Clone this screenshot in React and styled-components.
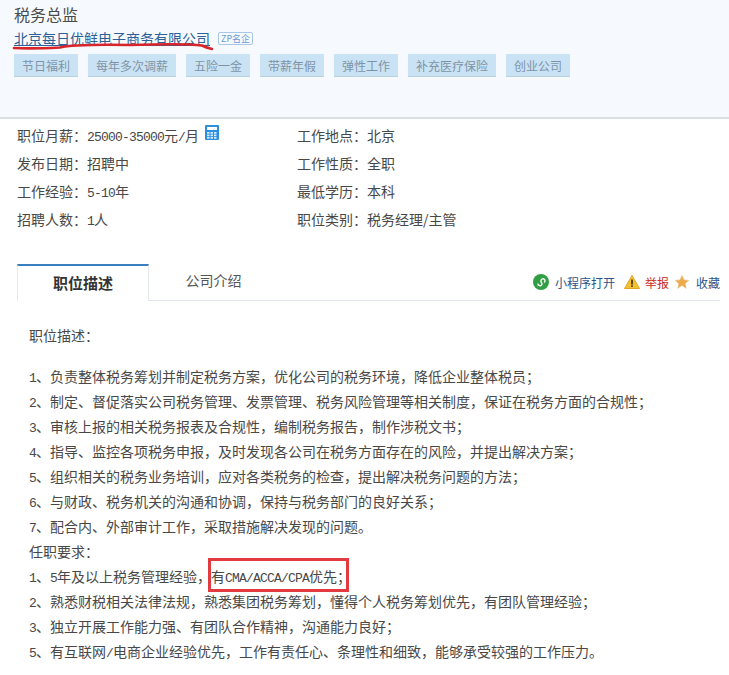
import React from "react";
import styled, { createGlobalStyle } from "styled-components";

const Global = createGlobalStyle`
  html, body { margin: 0; padding: 0; background: #fff; }
  body { font-family: "Noto Sans CJK SC", "Liberation Sans", sans-serif; font-size: 14px; color: #444; }
`;
const Page = styled.div`
  position: relative;
  width: 729px;
  height: 675px;
  overflow: hidden;
`;
const Header = styled.header`
  height: 119px;
  box-sizing: border-box;
  padding: 4px 14px 0;
  background: #f6faff;
  border-bottom: 2px solid #dcdfe2;
`;
const Title = styled.h1`
  margin: 0;
  font-size: 16px;
  font-weight: 400;
  line-height: 20px;
  color: #4a4a4a;
`;
const CompanyRow = styled.div`
  display: flex;
  align-items: center;
  gap: 8px;
  height: 26px;
  margin-top: 1px;
`;
const Company = styled.span`
  font-size: 14px;
  line-height: 20px;
  color: #2d5f99;
  text-decoration: underline;
  text-underline-offset: 1px;
`;
const Badge = styled.span`
  border: 1px solid #a9c6e8;
  border-radius: 2px;
  padding: 0 2px;
  font-size: 9px;
  line-height: 11px;
  color: #6b9bd5;
`;
const Tags = styled.div`
  display: flex;
  gap: 10px;
  margin-top: 3px;
`;
const Tag = styled.span`
  padding: 0 8px;
  height: 23px;
  line-height: 23px;
  font-size: 12px;
  color: #7f93a8;
  background: #c9e3f4;
  border-bottom: 1px solid #b9d2e0;
  box-sizing: border-box;
`;
const Info = styled.section`
  display: grid;
  grid-template-columns: 280px 1fr;
  grid-auto-rows: 28px;
  padding: 2px 0 0 17px;
`;
const Cell = styled.div`
  display: flex;
  align-items: center;
  font-size: 14px;
  color: #484848;
  white-space: pre;
`;
const Num = styled.span`
  font-family: "Liberation Mono", monospace;
  font-size: 13px;
  letter-spacing: -0.8px;
  line-height: 0;
`;
const Calc = styled.svg`
  width: 14px;
  height: 15px;
  margin: -5px 0 0 6px;
`;
const TabBar = styled.nav`
  display: flex;
  align-items: stretch;
  height: 36px;
  margin: 31px 9px 0 17px;
  border-bottom: 1px solid #e2e6ee;
  box-sizing: content-box;
`;
const ActiveTab = styled.div`
  width: 132px;
  height: 37px;
  box-sizing: border-box;
  border-top: 2px solid #3c7fc0;
  border-left: 1px solid #e4e8f0;
  border-right: 1px solid #e4e8f0;
  background: #fff;
  text-align: center;
  font-size: 15px;
  font-weight: 700;
  line-height: 34px;
  color: #333;
`;
const Tab = styled.div`
  width: 129px;
  text-align: center;
  font-size: 14px;
  line-height: 32px;
  color: #555;
`;
const Actions = styled.div`
  margin-left: auto;
  display: flex;
  align-items: center;
  height: 36px;
  font-size: 12px;
`;
const Action = styled.span`
  color: ${(p) => p.$color};
  margin-left: ${(p) => p.$gap}px;
  white-space: nowrap;
`;
const ActionIcon = styled.svg`
  width: 16px;
  height: 16px;
  margin-left: ${(p) => p.$gap}px;
`;
const Body = styled.section`
  padding: 22px 0 0 29px;
  font-size: 14px;
  color: #484848;
`;
const Heading = styled.p`
  margin: 0 0 16px;
  line-height: 25px;
  white-space: nowrap;
`;
const Line = styled.p`
  margin: 0;
  line-height: 25px;
  white-space: nowrap;
`;
const Scribble = styled.svg`
  position: absolute;
  left: 10px;
  top: 40px;
  width: 210px;
  height: 14px;
  overflow: visible;
`;
const RedBox = styled.div`
  position: absolute;
  left: 208px;
  top: 558px;
  width: 141px;
  height: 34px;
  box-sizing: border-box;
  border: 3px solid #e23a3e;
`;

const tags = ["节日福利", "每年多次调薪", "五险一金", "带薪年假", "弹性工作", "补充医疗保险", "创业公司"];

const T = ({ children }) => (
  <span>
    {children.split(/([0-9A-Za-z/\-]+)/).map((s, i) => (i % 2 ? <Num key={i}>{s}</Num> : s))}
  </span>
);

const lines = [
  "1、负责整体税务筹划并制定税务方案，优化公司的税务环境，降低企业整体税员；",
  "2、制定、督促落实公司税务管理、发票管理、税务风险管理等相关制度，保证在税务方面的合规性；",
  "3、审核上报的相关税务报表及合规性，编制税务报告，制作涉税文书；",
  "4、指导、监控各项税务申报，及时发现各公司在税务方面存在的风险，并提出解决方案；",
  "5、组织相关的税务业务培训，应对各类税务的检查，提出解决税务问题的方法；",
  "6、与财政、税务机关的沟通和协调，保持与税务部门的良好关系；",
  "7、配合内、外部审计工作，采取措施解决发现的问题。",
  "任职要求：",
  "1、5年及以上税务管理经验，有CMA/ACCA/CPA优先；",
  "2、熟悉财税相关法律法规，熟悉集团税务筹划，懂得个人税务筹划优先，有团队管理经验；",
  "3、独立开展工作能力强、有团队合作精神，沟通能力良好；",
  "5、有互联网/电商企业经验优先，工作有责任心、条理性和细致，能够承受较强的工作压力。",
];

export default function App() {
  return (
    <Page>
      <Global />
      <Header>
        <Title>税务总监</Title>
        <CompanyRow>
          <Company>北京每日优鲜电子商务有限公司</Company>
          <Badge>ZP名企</Badge>
        </CompanyRow>
        <Tags>
          {tags.map((t) => (
            <Tag key={t}>{t}</Tag>
          ))}
        </Tags>
      </Header>
      <Info>
        <Cell>
          <T>职位月薪：25000-35000元/月</T>
          <Calc viewBox="0 0 14 15">
            <rect width="14" height="15" rx="1" fill="#2b8fe0" />
            <rect x="2" y="2" width="10" height="3" fill="#fff" />
            {[2, 5.5, 9].map((x) =>
              [7, 9.5, 12].map((y) => <rect key={x + "-" + y} x={x} y={y} width="2.5" height="1.7" fill="#d6ecfb" />)
            )}
          </Calc>
        </Cell>
        <Cell>工作地点：北京</Cell>
        <Cell>发布日期：招聘中</Cell>
        <Cell>工作性质：全职</Cell>
        <Cell>
          <T>工作经验：5-10年</T>
        </Cell>
        <Cell>最低学历：本科</Cell>
        <Cell>
          <T>招聘人数：1人</T>
        </Cell>
        <Cell>职位类别：税务经理/主管</Cell>
      </Info>
      <TabBar>
        <ActiveTab>职位描述</ActiveTab>
        <Tab>公司介绍</Tab>
        <Actions>
          <ActionIcon $gap={0} viewBox="0 0 16 16">
            <circle cx="8" cy="8" r="8" fill="#2f9e44" />
            <path d="M5 9.5a2 2 0 1 0 3-1.5V7a2 2 0 1 1 3 1.5" fill="none" stroke="#fff" strokeWidth="1.4" />
          </ActionIcon>
          <Action $color="#2d5287" $gap={6}>小程序打开</Action>
          <ActionIcon $gap={9} viewBox="0 0 16 16">
            <path d="M8 1.5 15.5 14.5H.5Z" fill="#f2c230" stroke="#e0a526" />
            <rect x="7.2" y="5.5" width="1.6" height="5" fill="#3a2c10" />
            <rect x="7.2" y="11.3" width="1.6" height="1.6" fill="#3a2c10" />
          </ActionIcon>
          <Action $color="#c92a2a" $gap={5}>举报</Action>
          <ActionIcon $gap={5} viewBox="0 0 16 16">
            <path d="M8 1.5l2 4.4 4.8.5-3.6 3.2 1 4.7L8 11.4l-4.2 2.9 1-4.7L1.2 6.4 6 5.9Z" fill="#f0a94a" stroke="#e0c080" strokeWidth=".6" />
          </ActionIcon>
          <Action $color="#2d5287" $gap={6}>收藏</Action>
        </Actions>
      </TabBar>
      <Body>
        <Heading>职位描述：</Heading>
        {lines.map((l) => (
          <Line key={l}>
            <T>{l}</T>
          </Line>
        ))}
      </Body>
      <Scribble viewBox="0 0 210 14">
        <path d="M4 8C20 9 40 8 50 7.5C60 5 90 4.5 120 5C150 4 180 4 192 5.5C197 8 200 8.5 202 9" fill="none" stroke="#d7252b" strokeWidth="2.6" strokeLinecap="round" />
      </Scribble>
      <RedBox />
    </Page>
  );
}
